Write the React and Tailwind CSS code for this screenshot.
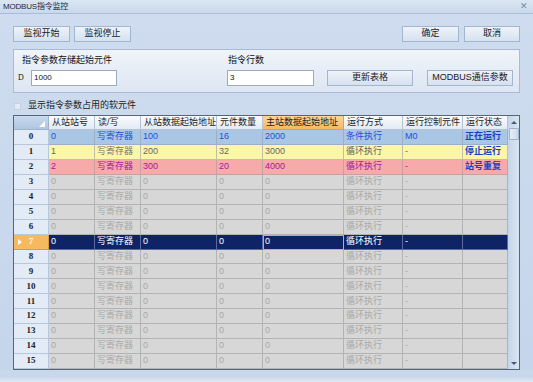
import React from "react";

const F = { fontFamily: '"Liberation Sans", "Noto Sans CJK SC", sans-serif' };

const cols = [46, 46, 76, 46, 81, 59, 60, 45];
const headers = ["从站站号", "读/写", "从站数据起始地址", "元件数量", "主站数据起始地址", "运行方式", "运行控制元件", "运行状态"];

function Btn({ children, w, className = "" }) {
  return (
    <div
      className={`flex h-[16px] items-center justify-center border border-[#a3b6d0] bg-gradient-to-b from-[#eef3f9] to-[#d6e1ef] text-[9px] text-[#1a1a1a] ${className}`}
      style={{ width: w }}
    >
      {children}
    </div>
  );
}

function Row({ i }) {
  let bg = "bg-[#d7d7d7]";
  let txt = "text-[#a9a9a9]";
  let line = "border-[#b3b3b3]";
  let status = "";
  let mode = "循环执行";
  let ctrl = "-";
  let vals = ["0", "0", "0", "0"];
  let rwCls = "";
  if (i === 0) {
    bg = "bg-[#a9c7e5]";
    txt = "text-[#1f4fd6]";
    line = "border-[#9bb0c8]";
    status = "正在运行";
    mode = "条件执行";
    ctrl = "M0";
    vals = ["0", "100", "16", "2000"];
  } else if (i === 1) {
    bg = "bg-[#fbf6a8]";
    txt = "text-[#666]";
    line = "border-[#c0c0a0]";
    status = "停止运行";
    vals = ["1", "200", "32", "3000"];
    rwCls = "text-[#777]";
  } else if (i === 2) {
    bg = "bg-[#f7aaaa]";
    txt = "text-[#a3199e]";
    line = "border-[#c8a0a0]";
    status = "站号重复";
    vals = ["2", "300", "20", "4000"];
  } else if (i === 7) {
    bg = "bg-[#0e2467]";
    txt = "text-white";
    line = "border-[#5a6aa0]";
  }
  const sel = i === 7;
  const cells = [vals[0], "写寄存器", vals[1], vals[2], vals[3], mode, ctrl, status];
  return (
    <div className="flex h-[15px]">
      <div
        className={`relative flex w-[35px] shrink-0 items-center justify-center border-b border-r ${
          sel ? "border-[#d99a40] bg-[#f7b960] text-white" : "border-[#b7c7dc] bg-[#e3ebf6] text-[#222]"
        } text-[9px] font-bold`}
        style={{ fontFamily: '"Liberation Serif", serif' }}
      >
        {sel && (
          <span className="absolute left-[4px] top-[4px] h-0 w-0 border-y-[3.5px] border-l-[4px] border-y-transparent border-l-white" />
        )}
        {i}
      </div>
      {cells.map((c, k) => {
        const isStatus = k === 7;
        const isRw = k === 1;
        let cls = txt;
        if (isStatus) cls = "text-[#1640c8] font-bold";
        if (isRw && rwCls) cls = rwCls;
        const focus = sel && k === 4;
        return (
          <div
            key={k}
            className={`flex shrink-0 items-center overflow-hidden whitespace-nowrap border-b border-r pl-[2px] text-[9px] ${line} ${bg} ${cls} ${
              focus ? "outline outline-1 -outline-offset-1 outline-[#c7b36a]" : ""
            }`}
            style={{ width: cols[k] }}
          >
            {c}
          </div>
        );
      })}
    </div>
  );
}

export default function App() {
  return (
    <div className="relative h-[382px] w-[533px] overflow-hidden bg-[#c8d8ec] text-[#111]" style={F}>
      {/* title bar */}
      <div className="flex h-[14px] items-center justify-between border-b border-[#aabdd6] bg-gradient-to-b from-[#dbe6f3] to-[#c9d8ec] pl-[3px] pr-[5px]">
        <span className="text-[8px] tracking-[-0.2px] text-[#1b2a44]">MODBUS指令监控</span>
        <span className="text-[9px] leading-none text-[#7b8aa0]">✕</span>
      </div>
      <div className="bg-gradient-to-b from-[#cfdcef] to-[#c5d5eb] px-[13px] pt-[12px]">
        {/* top buttons */}
        <div className="flex h-[16px] items-center">
          <div className="flex gap-[4px]">
            <Btn w={57}>监视开始</Btn>
            <Btn w={57}>监视停止</Btn>
          </div>
          <div className="ml-auto flex gap-[5px]">
            <Btn w={57}>确定</Btn>
            <Btn w={56}>取消</Btn>
          </div>
        </div>
        {/* group */}
        <div className="mt-[7px] flex h-[44px] border border-[#a9bbd3] bg-gradient-to-b from-[#f0f4fa] to-[#dde6f2] text-[9px]">
          <div className="flex w-[213px] flex-col pl-[8px] pt-[5px]">
            <span className="leading-[11px]">指令参数存储起始元件</span>
            <div className="mt-[4px] flex items-center">
              <span className="-ml-[4px] w-[13px] text-[8px]" style={{ fontFamily: '"Liberation Serif", serif' }}>D</span>
              <div className="flex h-[16px] w-[86px] items-center border border-[#9aaac0] bg-white pl-[2px] text-[8px]">1000</div>
            </div>
          </div>
          <div className="flex flex-col pt-[5px]">
            <span className="pl-[1px] leading-[11px]">指令行数</span>
            <div className="mt-[4px] flex items-center">
              <div className="flex h-[16px] w-[87px] items-center border border-[#9aaac0] bg-white pl-[2px] text-[8px]">3</div>
              <Btn w={86} className="ml-[13px]">更新表格</Btn>
              <Btn w={86} className="ml-[14px] text-[8px]">MODBUS通信参数</Btn>
            </div>
          </div>
        </div>
        {/* checkbox */}
        <div className="mt-[8px] flex h-[10px] items-center">
          <span className="ml-[1px] h-[7px] w-[7px] border border-[#c5d1e0] bg-[#e4ebf4]" />
          <span className="ml-[7px] text-[9px] text-[#222]">显示指令参数占用的软元件</span>
        </div>
        {/* grid */}
        <div className="mt-[4px] flex h-[255px] w-[507px] border border-[#55657c] bg-[#d7d7d7]">
          <div className="flex flex-col">
            {/* header */}
            <div className="flex h-[14px]">
              <div className="relative w-[35px] shrink-0 border-b border-r border-[#9fb2cc] bg-gradient-to-b from-[#c9d9ec] to-[#aec6e2]">
                <span className="absolute bottom-[2px] right-[3px] h-0 w-0 border-b-[6px] border-l-[6px] border-b-white border-l-transparent" />
              </div>
              {headers.map((h, k) => (
                <div
                  key={k}
                  className={`flex shrink-0 items-center whitespace-nowrap border-b border-r pl-[3px] text-[9px] ${
                    k === 4
                      ? "border-[#d9a050] bg-gradient-to-b from-[#fbd598] to-[#f6b760] text-[#222]"
                      : "border-[#b4c2d4] bg-gradient-to-b from-[#fafcfe] to-[#e3eaf3] text-[#222]"
                  }`}
                  style={{ width: cols[k] }}
                >
                  {h}
                </div>
              ))}
            </div>
            {Array.from({ length: 16 }, (_, i) => (
              <Row key={i} i={i} />
            ))}
          </div>
          {/* scrollbar */}
          <div className="ml-auto flex w-[12px] flex-col items-center bg-gradient-to-r from-[#c5d6ea] to-[#dae5f2]">
            <div className="flex h-[12px] w-full items-center justify-center">
              <span className="h-0 w-0 border-x-[3px] border-b-[3px] border-x-transparent border-b-[#4b5a74]" />
            </div>
            <div className="h-[12px] w-[10px] rounded-[1px] border border-[#9fb2cc] bg-gradient-to-r from-[#e6eef8] to-[#cbdaec]" />
            <div className="mt-auto flex h-[12px] w-full items-center justify-center">
              <span className="h-0 w-0 border-x-[3px] border-t-[3px] border-x-transparent border-t-[#4b5a74]" />
            </div>
          </div>
        </div>
      </div>
      <div className="absolute bottom-0 left-0 h-[6px] w-full bg-gradient-to-b from-[#c5d5eb] to-[#dfe8f4]" />
    </div>
  );
}
